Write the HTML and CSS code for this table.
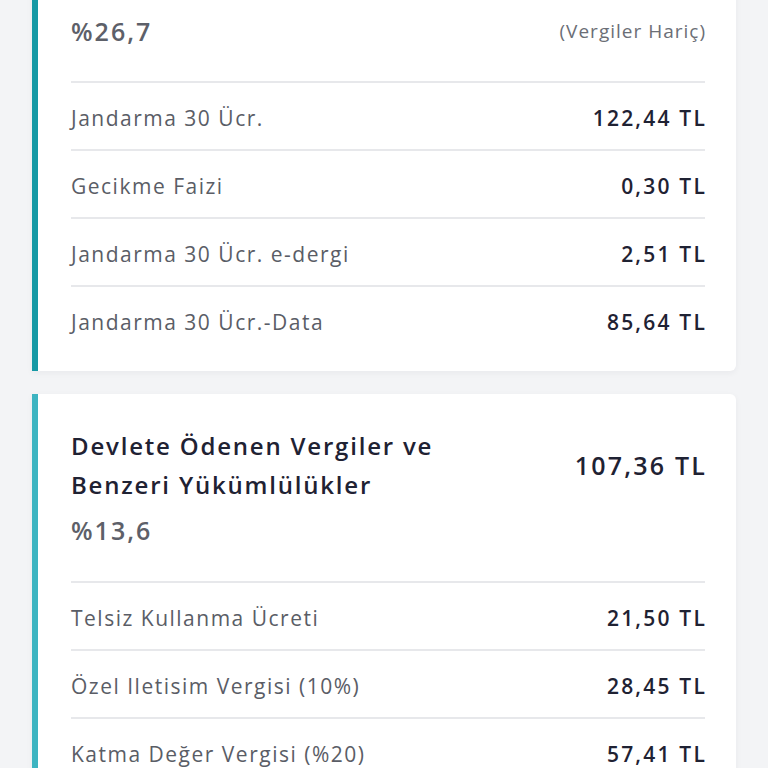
FILE: index.html
```html
<!DOCTYPE html>
<html lang="tr">
<head>
<meta charset="utf-8">
<link rel="stylesheet" href="styles.css">
</head>
<body>
<div class="page">
  <section class="card card-dark first">
    <div class="head">
      <div class="head-main">
        <div class="title">Kullanım Ücretleri</div>
        <div class="pct">%26,7</div>
      </div>
      <div class="note">(Vergiler Hariç)</div>
    </div>
    <div class="row"><span class="label">Jandarma 30 Ücr.</span><span class="value">122,44 TL</span></div>
    <div class="row"><span class="label">Gecikme Faizi</span><span class="value">0,30 TL</span></div>
    <div class="row"><span class="label">Jandarma 30 Ücr. e-dergi</span><span class="value">2,51 TL</span></div>
    <div class="row"><span class="label">Jandarma 30 Ücr.-Data</span><span class="value">85,64 TL</span></div>
  </section>
  <section class="card card-light">
    <div class="head head-center">
      <div class="head-main">
        <div class="title">Devlete Ödenen Vergiler ve<br>Benzeri Yükümlülükler</div>
      </div>
      <div class="total">107,36 TL</div>
    </div>
    <div class="pct pct-below">%13,6</div>
    <div class="row"><span class="label">Telsiz Kullanma Ücreti</span><span class="value">21,50 TL</span></div>
    <div class="row"><span class="label">Özel Iletisim Vergisi (10%)</span><span class="value">28,45 TL</span></div>
    <div class="row"><span class="label">Katma Değer Vergisi (%20)</span><span class="value">57,41 TL</span></div>
  </section>
</div>
</body>
</html>
```
FILE: styles.css
```css
* { box-sizing: border-box; }
html, body { margin: 0; padding: 0; }
body {
  background: #f3f4f6;
  font-family: "Open Sans", "Noto Sans", sans-serif;
  overflow: hidden;
}
.page {
  padding: 0 32px;
  display: flex;
  flex-direction: column;
  gap: 23px;
}
.card {
  background: #ffffff;
  border-left: 6px solid #1699a5;
  border-radius: 0 6px 6px 0;
  padding: 32px 31px 18px 33px;
  box-shadow: 0 2px 6px rgba(30, 40, 60, 0.05);
}
.card.first { margin-top: -69px; }
.card-light { border-left-color: #3db4c1; }
.head {
  display: flex;
  justify-content: space-between;
  align-items: flex-end;
}
.head-center { align-items: center; }
.title {
  font-size: 24px;
  font-weight: 600;
  color: #1f2233;
  line-height: 39px;
  letter-spacing: 1.8px;
}
.pct {
  font-size: 25px;
  font-weight: 600;
  color: #5d6069;
  line-height: 32px;
  margin-top: 13px;
  letter-spacing: 2px;
}
.pct-below { margin-top: 10px; padding-bottom: 35px; }
.note {
  font-size: 19px;
  color: #6b6e76;
  line-height: 32px;
  letter-spacing: 1px;
  margin-right: -1px;
}
.total {
  font-size: 25px;
  font-weight: 600;
  color: #1f2233;
  letter-spacing: 2.2px;
  margin-right: -2px;
}
.first .head { padding-bottom: 34px; }
.row {
  display: flex;
  justify-content: space-between;
  align-items: center;
  height: 68px;
  border-top: 2px solid #e7e8eb;
  padding-top: 3px;
}
.label {
  font-size: 21px;
  color: #5a5d66;
  letter-spacing: 1.5px;
}
.value {
  font-size: 21px;
  font-weight: 600;
  color: #1f2233;
  letter-spacing: 2.2px;
  margin-right: -2px;
}
```
